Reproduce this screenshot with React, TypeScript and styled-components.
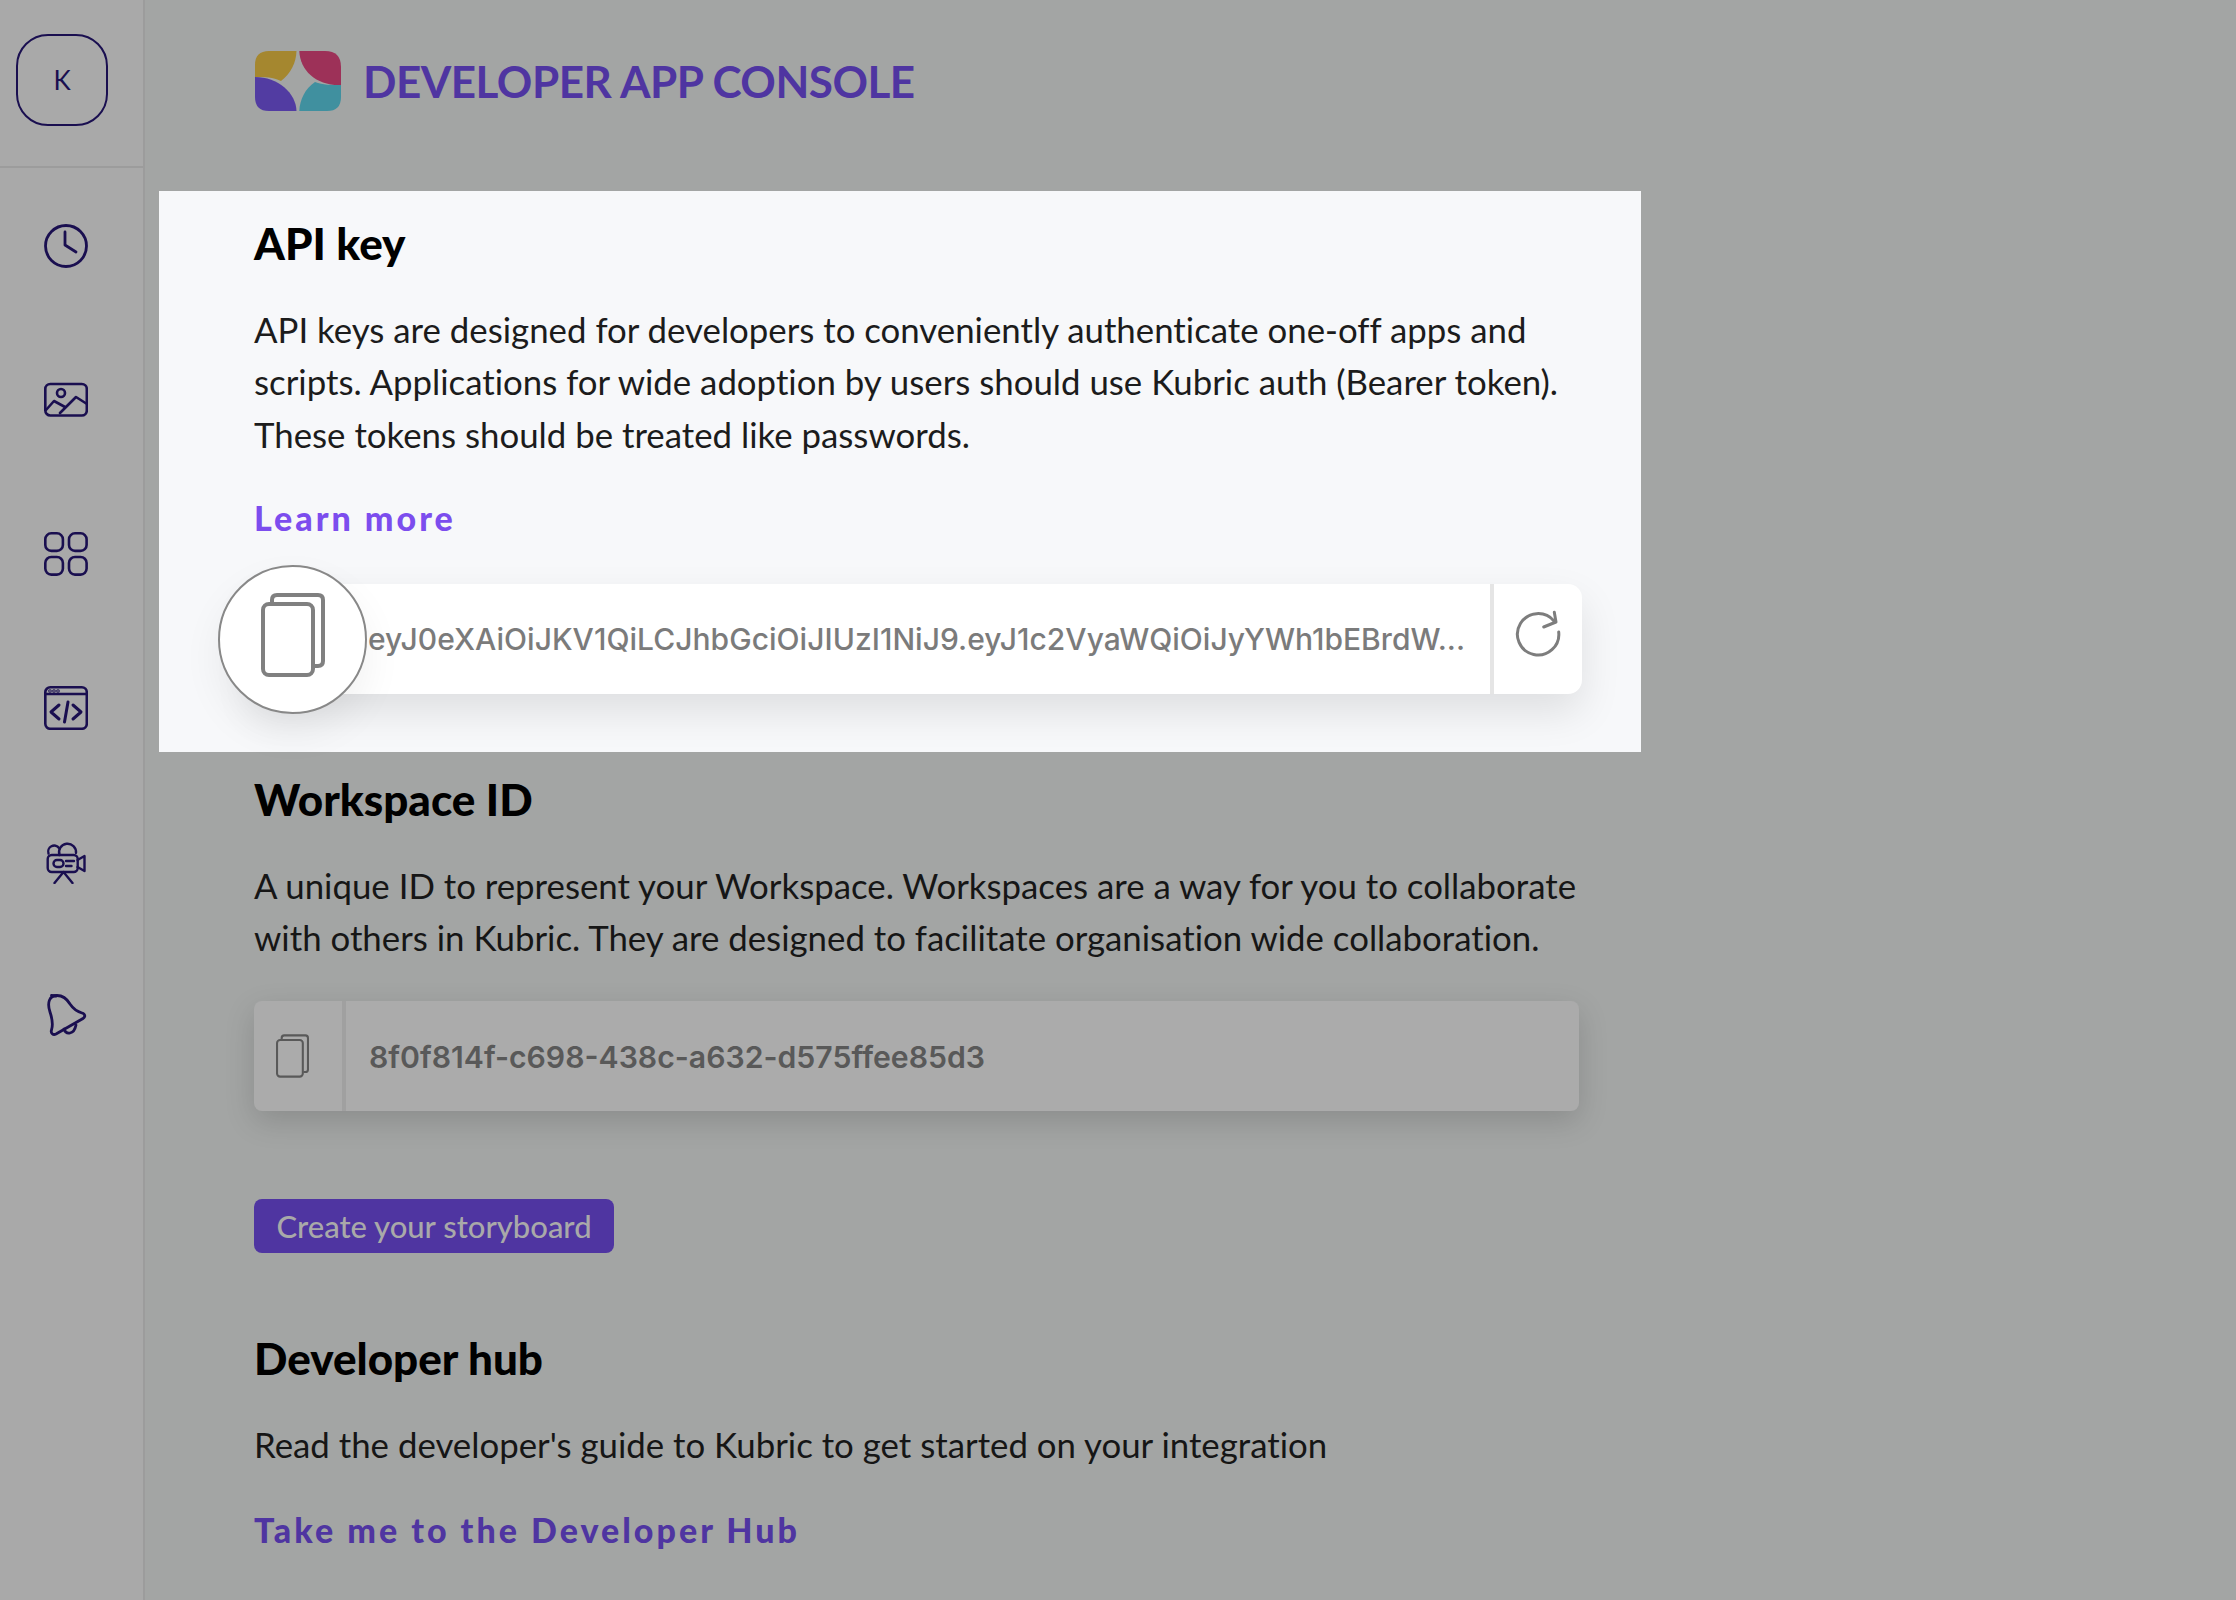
import React from "react";
import styled, { createGlobalStyle } from "styled-components";

const GlobalStyle = createGlobalStyle`
  html, body {
    margin: 0;
    padding: 0;
    background: #a3a5a4;
  }
  * {
    box-sizing: border-box;
  }
`;

const ink = "#1a0f50";

const ClockIcon = () => (
  <svg viewBox="0 0 44 44" fill="none" stroke={ink} strokeWidth="2.8" strokeLinecap="round" strokeLinejoin="round">
    <circle cx="22" cy="22" r="20.5" />
    <polyline points="21,8 21,21 32,28" />
  </svg>
);

const ImageIcon = () => (
  <svg viewBox="0 0 44 44" fill="none" stroke={ink} strokeWidth="2.6" strokeLinecap="round" strokeLinejoin="round">
    <rect x="1.3" y="6" width="41.5" height="31.5" rx="5" />
    <circle cx="17" cy="15" r="4" />
    <polyline points="2,32 10,23 21,29" />
    <polyline points="16,35 32,19 43,26" />
  </svg>
);

const GridIcon = () => (
  <svg viewBox="0 0 44 44" fill="none" stroke={ink} strokeWidth="2.6">
    <rect x="1.3" y="1.3" width="17.6" height="17.6" rx="6" />
    <rect x="25" y="1.3" width="17.6" height="17.6" rx="6" />
    <rect x="1.3" y="25" width="17.6" height="17.6" rx="6" />
    <rect x="25" y="25" width="17.6" height="17.6" rx="6" />
  </svg>
);

const CodeIcon = () => (
  <svg viewBox="0 0 44 44" fill="none" stroke={ink} strokeWidth="2.6" strokeLinecap="round" strokeLinejoin="round">
    <rect x="1.3" y="1.3" width="41.5" height="41.5" rx="5" />
    <line x1="1.3" y1="8" x2="42.7" y2="8" />
    <circle cx="6" cy="5" r="0.5" />
    <circle cx="10" cy="5" r="0.5" />
    <circle cx="14" cy="5" r="0.5" />
    <polyline points="15,19 7,26 15,33" strokeWidth="3" />
    <polyline points="29,19 37,26 29,33" strokeWidth="3" />
    <line x1="24" y1="16" x2="20.5" y2="36" strokeWidth="3" />
  </svg>
);

const CameraIcon = () => (
  <svg viewBox="0 0 39 44" fill="none" stroke={ink} strokeWidth="2.4" strokeLinecap="round" strokeLinejoin="round">
    <rect x="1.2" y="15" width="30" height="17" rx="4" />
    <path d="M31 20 L38 16 V31 L31 27" />
    <path d="M13 15 A8.5 8.5 0 1 1 29.5 13" />
    <path d="M2 13.5 A6 6 0 0 1 12.5 8" />
    <rect x="7" y="20" width="10" height="7" rx="3.4" />
    <line x1="19.5" y1="21" x2="27.5" y2="21" />
    <line x1="19.5" y1="26" x2="25" y2="26" />
    <polyline points="8,43 17,32 26,43" />
  </svg>
);

const BellIcon = () => (
  <svg viewBox="-2 0 42 44" fill="none" stroke={ink} strokeWidth="2.8" strokeLinecap="round" strokeLinejoin="round">
    <path d="M10 1.5 C16 1.5 20 5 23 10 C26 14.5 30 17.5 35 19 C38.5 20 38.5 23 36 24.5 L9 40 C6 41.5 3.5 39 4.5 36 C6.5 30 5 24 3 18 C0 9 2 1.5 10 1.5 Z" />
    <path d="M17 35 C19 41 27 41 29 31" />
    <line x1="4.5" y1="1.5" x2="9" y2="2" />
  </svg>
);

const CopyIcon = () => (
  <svg viewBox="0 0 64 84" fill="none" stroke="currentColor" strokeWidth="4" strokeLinejoin="round">
    <rect x="2" y="11" width="50" height="71" rx="6" />
    <path d="M11 9 V7 Q11 2 16 2 H57 Q62 2 62 7 V68 Q62 73 57 73 H53" />
  </svg>
);

const RefreshIcon = () => (
  <svg viewBox="0 0 48 48" fill="none" stroke="#7d7d7d" strokeWidth="3" strokeLinecap="round" strokeLinejoin="round">
    <path d="M44.7 22 A20.7 20.7 0 1 1 40 11" />
    <polyline points="40.3,2.3 42,12 29.7,17" />
  </svg>
);

const Logo = () => (
  <svg viewBox="0 0 86 60">
    <path fill="#a5872f" d="M0 26 V14 Q0 0 14 0 H41.5 C41 12 36 22 26 30 C18 26 10 26 0 26 Z" />
    <path fill="#523ca2" d="M0 26 C23 26 41 42 41.5 60 H14 Q0 60 0 46 Z" />
    <path fill="#9d3158" d="M44.3 0 H70 Q86 0 86 16 V34 C62 35 45 20 44.3 0 Z" />
    <path fill="#40909f" d="M44.3 60 C45 48 50 38 60 31 C68 34 76 34 86 34 V46 Q86 60 72 60 H44.3 Z" />
  </svg>
);

const navIcons = [
  { key: "recent", icon: <ClockIcon /> },
  { key: "media", icon: <ImageIcon /> },
  { key: "apps", icon: <GridIcon /> },
  { key: "code", icon: <CodeIcon /> },
  { key: "video", icon: <CameraIcon /> },
  { key: "alerts", icon: <BellIcon /> },
];

export default function App() {
  return (
    <>
      <GlobalStyle />
      <Page>
        <Sidebar>
          <AvatarArea>
            <Avatar>K</Avatar>
          </AvatarArea>
          <Nav>
            {navIcons.map((item) => (
              <NavItem key={item.key}>{item.icon}</NavItem>
            ))}
          </Nav>
        </Sidebar>
        <Main>
          <Header>
            <LogoMark>
              <Logo />
            </LogoMark>
            <ConsoleTitle>DEVELOPER APP CONSOLE</ConsoleTitle>
          </Header>

          <Spotlight>
            <Heading>API key</Heading>
            <Copy $dim={false}>
              API keys are designed for developers to conveniently authenticate one-off apps and
              <br />
              scripts. Applications for wide adoption by users should use Kubric auth (Bearer token).
              <br />
              These tokens should be treated like passwords.
            </Copy>
            <LearnMore href="#">Learn more</LearnMore>
            <TokenField>
              <CopyCircle>
                <BigCopy>
                  <CopyIcon />
                </BigCopy>
              </CopyCircle>
              <TokenText>eyJ0eXAiOiJKV1QiLCJhbGciOiJIUzI1NiJ9.eyJ1c2VyaWQiOiJyYWh1bEBrdW...</TokenText>
              <RefreshCell>
                <RefreshIcon />
              </RefreshCell>
            </TokenField>
          </Spotlight>

          <Section>
            <Heading>Workspace ID</Heading>
            <Copy $dim>
              A unique ID to represent your Workspace. Workspaces are a way for you to collaborate
              <br />
              with others in Kubric. They are designed to facilitate organisation wide collaboration.
            </Copy>
            <WorkspaceField>
              <SmallCopy>
                <CopyIcon />
              </SmallCopy>
              <WorkspaceValue>8f0f814f-c698-438c-a632-d575ffee85d3</WorkspaceValue>
            </WorkspaceField>
            <StoryboardButton>Create your storyboard</StoryboardButton>
          </Section>

          <HubSection>
            <Heading>Developer hub</Heading>
            <Copy $dim>Read the developer's guide to Kubric to get started on your integration</Copy>
            <HubLink href="#">Take me to the Developer Hub</HubLink>
          </HubSection>
        </Main>
      </Page>
    </>
  );
}

const Page = styled.div`
  display: flex;
  width: 2236px;
  height: 1600px;
  overflow: hidden;
  background: #a3a5a4;
  font-family: Lato, "Open Sans", sans-serif;
`;

const Sidebar = styled.aside`
  width: 145px;
  flex-shrink: 0;
  background: #a9a9a9;
  border-right: 2px solid #9c9c9c;
`;

const AvatarArea = styled.div`
  height: 168px;
  padding: 34px 0 0 16px;
  border-bottom: 2px solid #9c9c9c;
`;

const Avatar = styled.div`
  width: 92px;
  height: 92px;
  display: flex;
  align-items: center;
  justify-content: center;
  border: 2px solid ${ink};
  border-radius: 32px;
  color: ${ink};
  font-size: 26px;
`;

const Nav = styled.nav`
  display: flex;
  flex-direction: column;
  gap: 110px;
  padding: 56px 0 0 44px;
`;

const NavItem = styled.div`
  width: 44px;
  height: 44px;

  svg {
    display: block;
    width: 100%;
    height: 100%;
  }
`;

const Main = styled.main`
  flex: 1;
  min-width: 0;
  padding-left: 109px;
`;

const Header = styled.header`
  height: 191px;
  display: flex;
  align-items: flex-start;
  gap: 22px;
  padding-top: 51px;
`;

const LogoMark = styled.div`
  width: 86px;
  height: 60px;
  margin-left: 1px;

  svg {
    display: block;
    width: 100%;
    height: 100%;
  }
`;

const ConsoleTitle = styled.h1`
  margin: 5px 0 0;
  font-size: 44px;
  line-height: 50px;
  font-weight: 700;
  color: #4f35a1;
  letter-spacing: -0.5px;
`;

const Spotlight = styled.section`
  width: 1482px;
  height: 561px;
  margin-left: -95px;
  padding: 25px 0 0 95px;
  background: #f7f8fa;
`;

const Section = styled.section`
  padding-top: 20px;
`;

const HubSection = styled.section`
  padding-top: 78px;
`;

const Heading = styled.h2`
  margin: 0;
  font-size: 44px;
  line-height: 54px;
  font-weight: 900;
  color: #000;
`;

const Copy = styled.p<{ $dim: boolean }>`
  margin: 34px 0 0;
  font-size: 34.8px;
  line-height: 52.4px;
  font-variant-ligatures: none;
  color: ${(p) => (p.$dim ? "#161616" : "#1c1c1c")};
`;

const LearnMore = styled.a`
  display: block;
  margin-top: 35px;
  font-size: 34px;
  line-height: 44px;
  font-weight: 900;
  letter-spacing: 3px;
  color: #7c4dee;
  text-decoration: none;
`;

const TokenField = styled.div`
  position: relative;
  width: 1328px;
  height: 110px;
  margin-top: 44px;
  display: flex;
  align-items: center;
  background: #fff;
  border-radius: 0 14px 14px 0;
  box-shadow: 0 18px 40px rgba(0, 0, 0, 0.1);
`;

const CopyCircle = styled.div`
  position: absolute;
  left: -36px;
  top: -19px;
  width: 149px;
  height: 149px;
  display: flex;
  align-items: center;
  justify-content: center;
  padding-bottom: 10px;
  border: 2px solid #888;
  border-radius: 50%;
  background: #fff;
  color: #808080;
  box-shadow: 0 18px 40px rgba(0, 0, 0, 0.06);
`;

const BigCopy = styled.div`
  width: 64px;
  height: 84px;

  svg {
    display: block;
    width: 100%;
    height: 100%;
  }
`;

const TokenText = styled.div`
  width: 1122px;
  margin-left: 114px;
  font-family: Inter, "Liberation Sans", sans-serif;
  font-size: 30px;
  font-weight: 500;
  letter-spacing: 0.03px;
  color: #7b7b7b;
  white-space: nowrap;
`;

const RefreshCell = styled.div`
  align-self: stretch;
  flex: 1;
  display: flex;
  align-items: center;
  justify-content: center;
  padding-bottom: 10px;
  border-left: 4px solid #e5e5e5;

  svg {
    width: 48px;
    height: 48px;
  }
`;

const WorkspaceField = styled.div`
  width: 1325px;
  height: 110px;
  margin-top: 36px;
  display: flex;
  align-items: center;
  background: #ababab;
  border-radius: 8px;
  box-shadow: 0 10px 30px rgba(0, 0, 0, 0.15);
`;

const SmallCopy = styled.div`
  width: 92px;
  height: 100%;
  display: flex;
  align-items: center;
  justify-content: center;
  padding-right: 12px;
  border-right: 4px solid #a0a0a0;
  color: #595959;

  svg {
    width: 33px;
    height: 44px;
  }
`;

const WorkspaceValue = styled.div`
  margin: 2px 0 0 23px;
  font-family: Inter, "Liberation Sans", sans-serif;
  font-size: 30.2px;
  font-weight: 600;
  color: #595959;
`;

const StoryboardButton = styled.button`
  display: block;
  width: 360px;
  height: 54px;
  margin-top: 88px;
  border: 0;
  border-radius: 8px;
  background: #4f35a1;
  color: #a9a9a9;
  font-family: Lato, "Open Sans", sans-serif;
  font-size: 31px;
  font-weight: 500;
  text-align: center;
  padding: 0;
`;

const HubLink = styled.a`
  display: block;
  margin-top: 37px;
  font-size: 34px;
  line-height: 44px;
  font-weight: 900;
  letter-spacing: 3px;
  color: #4f35a1;
  text-decoration: none;
`;
